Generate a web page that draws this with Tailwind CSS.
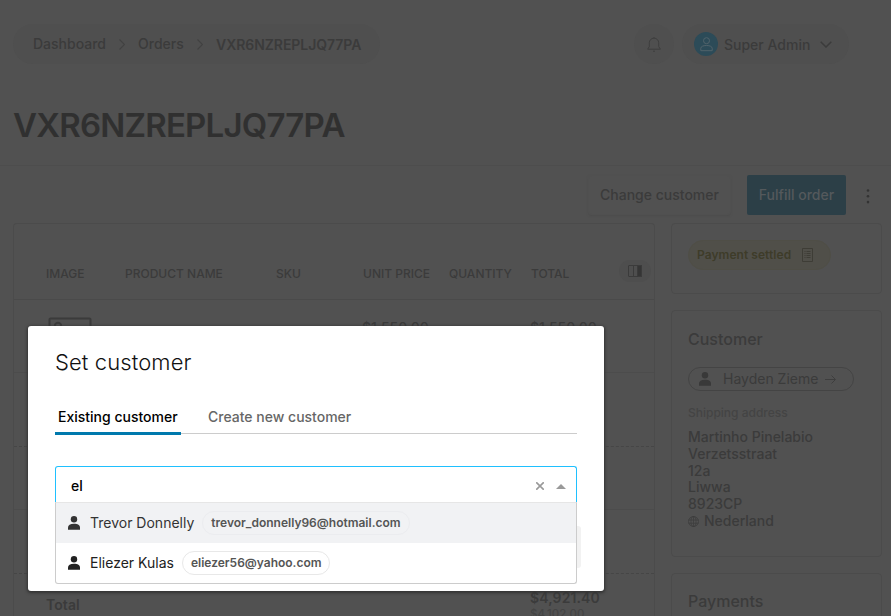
<!DOCTYPE html>
<html lang="en">
<head>
<meta charset="utf-8">
<title>Order VXR6NZREPLJQ77PA</title>
<script src="https://cdn.jsdelivr.net/npm/@tailwindcss/browser@4"></script>
</head>
<body class="relative h-[616px] w-[891px] overflow-hidden bg-[#515151] font-['Inter',sans-serif] text-[14px] text-[#3b3b3b]">
<svg class="hidden">
  <symbol id="user" viewBox="0 0 12 14"><circle cx="6" cy="3.3" r="3.2"/><path d="M0 13.8v-2.3C0 9.200 2.200 7.800 6 7.800s6 1.400 6 3.700v2.300z"/></symbol>
</svg>

<div class="flex h-full flex-col overflow-hidden">
  <header class="h-[166px] shrink-0 border-b border-[#4d4d4d] pt-6 pr-[42px] pl-[13px]">
    <div class="flex h-10 items-center">
      <nav class="flex h-10 w-[367px] items-center rounded-full bg-[#4f4f4f] pl-5 font-medium whitespace-nowrap">
        <span class="w-[86px] pb-0.5 font-[450]">Dashboard</span>
        <svg class="mr-[13px] h-[11px] w-[6px]" viewBox="0 0 6 11" fill="none" stroke="#424242" stroke-width="1.200"><path d="M.5.5l5 5-5 5"/></svg>
        <span class="w-[59px] pb-0.5 font-[450]">Orders</span>
        <svg class="mr-[13px] h-[11px] w-[6px]" viewBox="0 0 6 11" fill="none" stroke="#424242" stroke-width="1.200"><path d="M.5.5l5 5-5 5"/></svg>
        <span class="font-semibold tracking-[-0.05px]">VXR6NZREPLJQ77PA</span>
      </nav>
      <div class="ml-auto flex size-10 items-center justify-center rounded-full bg-[#4f4f4f]">
        <svg class="h-[15px] w-[14px]" viewBox="0 0 14 15" fill="none" stroke="#3e3e3e" stroke-width="1"><path d="M.7 12.200h12.600L11.700 9.500V5.800C11.700 3.200 9.700 1.200 7 1.200S2.300 3.200 2.300 5.800v3.700z" stroke-linejoin="round"/><path d="M6 14.200h2M7 0v1"/></svg>
      </div>
      <div class="ml-2 flex h-10 w-[167px] items-center rounded-full bg-[#4f4f4f] pl-3">
        <div class="flex size-6 items-center justify-center rounded-full bg-[#2c4b58]">
          <svg class="h-[15px] w-[13px]" viewBox="0 0 13 15" fill="none" stroke="#51636b" stroke-width="1"><circle cx="6.500" cy="3.700" r="3"/><path d="M.8 13.700v-2.400c0-1.700 2.300-2.800 5.700-2.800s5.700 1.100 5.700 2.800v2.400z" stroke-linejoin="round"/></svg>
        </div>
        <span class="ml-1.5 w-[96px] font-medium">Super Admin</span>
        <svg class="h-[7px] w-[12px]" viewBox="0 0 12 7" fill="none" stroke="#3b3b3b" stroke-width="1.500"><path d="M.7.7L6 6 11.300.7"/></svg>
      </div>
    </div>
    <h1 class="mt-[41px] text-[33px] leading-10 font-semibold tracking-[-0.8px] text-[#303030]">VXR6NZREPLJQ77PA</h1>
  </header>

  <div class="flex h-[57px] shrink-0 items-start pt-[9px] font-medium">
    <button class="ml-[588px] h-10 w-[143px] rounded-sm border border-[#505050] pb-0.5 shadow-[0_1px_2px_#4c4c4c]">Change customer</button>
    <button class="ml-4 h-10 w-[99px] rounded-xs bg-[#2c3f47] pb-0.5 text-[#54595c]">Fulfill order</button>
    <svg class="mt-[14px] ml-5 h-[15px] w-1" viewBox="0 0 4 15" fill="#333"><circle cx="2" cy="1.500" r="1.300"/><circle cx="2" cy="7.300" r="1.300"/><circle cx="2" cy="13.100" r="1.300"/></svg>
  </div>

  <main class="flex h-[393px] overflow-hidden pl-[13px]">
    <section class="w-[642px] rounded-t border border-b-0 border-[#4b4b4b]">
      <div class="flex h-[76px] items-end border-b border-[#4a4a4a] pb-[17px] pl-8 text-[12px] leading-4 font-medium">
        <span class="w-[79px]">IMAGE</span>
        <span class="w-[151px]">PRODUCT NAME</span>
        <span class="w-[87px]">SKU</span>
        <span class="w-[86px]">UNIT PRICE</span>
        <span class="w-[82px]">QUANTITY</span>
        <span class="w-[88px]">TOTAL</span>
        <span class="flex h-[22px] w-8 items-center justify-center rounded-full bg-[#4e4e4e]">
          <svg class="h-3 w-[14px]" viewBox="0 0 14 12" fill="none" stroke="#3b3b3b"><rect x=".5" y=".5" width="13" height="11" rx=".5"/><path d="M5.500 0v12"/><path d="M9.500.5h4v11h-4z" fill="#353535"/></svg>
        </span>
      </div>
      <div class="flex h-[73px] border-b border-[#4c4c4c] pt-[17px] pl-[34px]">
        <svg class="h-[36px] w-[44px]" viewBox="0 0 44 36" fill="none" stroke="#3b3b3b" stroke-width="2"><rect x="1.500" y="1.500" width="41" height="32" rx="1"/><circle cx="10" cy="9" r="3.200"/></svg>
        <span class="ml-[270px] w-[168px] font-medium">$1,550.00</span>
        <span class="font-medium">$1,550.00</span>
      </div>
      <div class="h-[74px] border-b border-dashed border-[#464646]"></div>
      <div class="h-[63px] border-b border-[#4c4c4c]"></div>
      <div class="h-[64px] border-b border-dashed border-[#464646]"></div>
      <div class="flex pt-[14px] pl-8 font-semibold">
        <span class="w-[484px] pt-1.5 tracking-[0.1px]">Total</span>
        <div class="leading-5"><div class="tracking-[0.1px]">$4,921.40</div><div class="text-[11.500px] leading-[13px] font-medium text-[#444]">$4,102.00</div></div>
      </div>
    </section>

    <aside class="ml-4 flex w-[211px] flex-col gap-4">
      <section class="h-[71px] shrink-0 rounded border border-[#4b4b4b] pt-4 pl-4">
        <div class="flex h-[30px] w-[143px] items-center rounded-full border border-[#4f4e46] bg-[#504f49] pl-2 text-[12px] font-semibold text-[#3e3c29]">
          <span class="w-[105px] tracking-[0.05px]">Payment settled</span>
          <svg class="h-[14px] w-[11px]" viewBox="0 0 11 14" fill="none" stroke="#3e3d36"><path d="M.5.5h10v13H.5z"/><path d="M2.500 3.500h1M4.500 3.500h4M2.500 5.500h1M4.500 5.500h4M2.500 7.500h1M4.500 7.500h4M2.500 9.500h1M4.500 9.500h4"/></svg>
        </div>
      </section>
      <section class="h-[247px] shrink-0 rounded border border-[#4b4b4b] pt-[18px] pl-4">
        <h2 class="text-[16px] leading-5 font-medium">Customer</h2>
        <div class="mt-[18px] flex h-6 w-[166px] items-center rounded-full border border-[#444] pl-2.5">
          <svg class="h-[14px] w-3 fill-[#393939]"><use href="#user"/></svg>
          <span class="ml-3 w-[102px] pb-0.5">Hayden Zieme</span>
          <svg class="h-[9px] w-[11px]" viewBox="0 0 11 9" fill="none" stroke="#3e3e3e"><path d="M0 4.500h10M6.500.5l4 4-4 4"/></svg>
        </div>
        <div class="mt-[14px] text-[12px] leading-4 font-[450] text-[#444]">Shipping address</div>
        <div class="mt-2 leading-[16.800px] font-[450]">
          <div>Martinho Pinelabio</div>
          <div>Verzetsstraat</div>
          <div>12a</div>
          <div>Liwwa</div>
          <div>8923CP</div>
          <div class="flex items-center">
            <svg class="mr-[5px] size-[11px]" viewBox="0 0 11 11" fill="none" stroke="#3d3d3d" stroke-width=".8"><circle cx="5.500" cy="5.500" r="5"/><ellipse cx="5.500" cy="5.500" rx="2.500" ry="5"/><path d="M.5 4h10M.5 7.200h10M5.500.5v10"/></svg>
            <span>Nederland</span>
          </div>
        </div>
      </section>
      <section class="h-[100px] shrink-0 rounded border border-[#4b4b4b] pt-[17px] pl-4">
        <h2 class="text-[16px] leading-5 font-medium">Payments</h2>
      </section>
    </aside>
  </main>
</div>

<div class="absolute top-[326px] left-[28px] h-[265px] w-[576px] rounded-[3px] bg-white px-[27px] pt-6 text-black shadow-[0_1px_3px_1px_#333]">
  <h2 class="text-[22px] leading-6 font-light tracking-[0.1px] text-[#111]">Set customer</h2>
  <div class="mt-[26px] flex h-[34px] border-b border-[#ccc] leading-[34px]">
    <div class="h-[35px] w-[126px] shrink-0 border-b-[3px] border-[#0079ad] pl-[3px] font-medium whitespace-nowrap">Existing customer</div>
    <div class="ml-[27px] font-[450] text-[#666]">Create new customer</div>
  </div>
  <div class="relative mt-8">
    <div class="flex h-[37px] items-center rounded-t-[3px] border border-b-0 border-[#1fc0ff] pt-[2px] pr-2.5 pl-[15px]">
      <span class="pb-0.5 font-[450]">el</span>
      <svg class="mr-3 ml-auto size-2" viewBox="0 0 8 8" fill="none" stroke="#999" stroke-width="1.600"><path d="M.2.2l7.600 7.600M7.800.2L.2 7.800"/></svg>
      <svg class="h-[5px] w-2.5 fill-[#999]" viewBox="0 0 10 5"><path d="M5 0l5 5H0z"/></svg>
    </div>
    <div class="absolute top-[60px] -right-1 h-[42px] w-3 rounded-[3px] bg-[#f2f2f2]"></div>
    <div class="relative -mt-px h-[82px] rounded-b-[3px] border border-t-[#e6e6e6] border-r-[#ccc] border-b-[#ccc] border-l-[#ccc] bg-white">
      <div class="flex h-10 items-center bg-[#f1f2f4] pl-3">
        <svg class="h-[14px] w-3 fill-[#333]"><use href="#user"/></svg>
        <span class="ml-2.5 pb-0.5 text-[#333]">Trevor Donnelly</span>
        <span class="ml-2 flex h-6 items-center rounded-full border border-[#ebecef] px-2 text-[12px] font-semibold text-[#555]">trevor_donnelly96@hotmail.com</span>
      </div>
      <div class="flex h-10 items-center pl-3">
        <svg class="h-[14px] w-3 fill-[#212121]"><use href="#user"/></svg>
        <span class="ml-2.5 pb-0.5 text-[#212121]">Eliezer Kulas</span>
        <span class="ml-2 flex h-6 items-center rounded-full border border-[#e8e8e8] pr-[7px] pl-2 text-[12px] font-semibold text-[#555]">eliezer56@yahoo.com</span>
      </div>
    </div>
  </div>
</div>
</body>
</html>
